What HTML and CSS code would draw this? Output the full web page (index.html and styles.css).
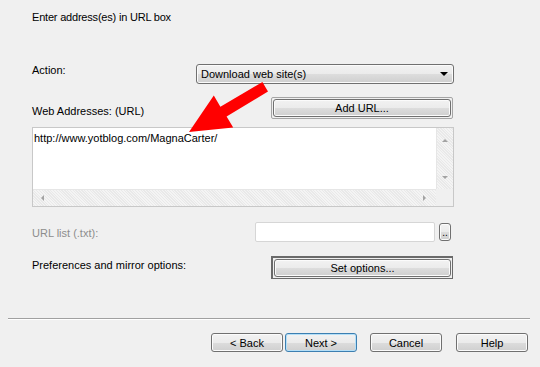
FILE: index.html
```html
<!DOCTYPE html>
<html lang="en">
<head>
  <meta charset="UTF-8">
  <title>Enter address(es) in URL box</title>
  <link rel="stylesheet" href="styles.css">
</head>
<body>
  <div class="wizard">
    <p class="intro">Enter address(es) in URL box</p>

    <div class="form">
      <div class="row row-action">
        <span class="label">Action:</span>
        <div class="select">
          <span>Download web site(s)</span>
          <span class="caret"></span>
        </div>
      </div>

      <div class="row row-urls">
        <span class="label">Web Addresses: (URL)</span>
        <div class="btn-frame">
          <button class="btn">Add URL...</button>
        </div>
      </div>

      <div class="url-box">
        <div class="url-text">http://www.yotblog.com/MagnaCarter/</div>
        <div class="vscroll">
          <span class="arr arr-up"></span>
          <span class="arr arr-down"></span>
        </div>
        <div class="hscroll">
          <span class="arr arr-left"></span>
          <span class="arr arr-right"></span>
        </div>
        <div class="corner"></div>
      </div>

      <div class="row row-list">
        <span class="label disabled">URL list (.txt):</span>
        <div class="list-ctrl">
          <div class="text-input"></div>
          <button class="btn btn-tiny">..</button>
        </div>
      </div>

      <div class="row row-prefs">
        <span class="label">Preferences and mirror options:</span>
        <div class="btn-frame sunken">
          <button class="btn">Set options...</button>
        </div>
      </div>
    </div>

    <div class="sep"></div>

    <div class="actions">
      <button class="btn btn-nav">&lt; Back</button>
      <button class="btn btn-nav default">Next &gt;</button>
      <button class="btn btn-nav cancel">Cancel</button>
      <button class="btn btn-nav help">Help</button>
    </div>

    <svg class="arrow" width="540" height="367" viewBox="0 0 540 367">
      <polygon fill="#ff0000" points="189,132 213.8,95.5 220.4,106.8 262.4,82 268,91.6 226.6,116.4 233.2,127.6"/>
    </svg>
  </div>
</body>
</html>
```

FILE: styles.css
```css
* { margin: 0; padding: 0; box-sizing: border-box; }
body {
  background: #f0f0f0;
  font-family: 'Liberation Sans', Arial, sans-serif;
  font-size: 11px;
  color: #000;
}
.wizard {
  position: relative;
  width: 540px;
  height: 367px;
  overflow: hidden;
}
.intro {
  padding: 11px 0 0 32px;
  line-height: 13px;
  letter-spacing: -0.2px;
}
.form {
  padding: 0 86px 0 32px;
}
.row {
  display: flex;
  justify-content: space-between;
  align-items: flex-start;
  line-height: 13px;
}
.label.disabled { color: #8d8d8d; }

.row-action { margin-top: 40px; height: 20px; }
.row-urls { margin-top: 13px; height: 22px; }
.row-urls .label { margin-top: 8px; }
.row-list { margin-top: 15px; height: 20px; }
.row-list .label { margin-top: 5px; }
.row-prefs { margin-top: 14px; height: 23px; }
.row-prefs .label { margin-top: 3px; }

.btn {
  font: inherit;
  color: #000;
  height: 19px;
  border: 1px solid #707070;
  border-radius: 3px;
  background: linear-gradient(#f2f2f2 0%, #ebebeb 50%, #dddddd 50%, #cfcfcf 100%);
  box-shadow: inset 0 0 0 1px #fbfbfb;
  line-height: 16px;
  text-align: center;
}

.select {
  width: 258px;
  height: 20px;
  display: flex;
  align-items: center;
  justify-content: space-between;
  padding: 0 5px 0 4px;
  border: 1px solid #707070;
  border-radius: 3px;
  background: linear-gradient(#f2f2f2 0%, #ebebeb 50%, #dddddd 50%, #cfcfcf 100%);
  box-shadow: inset 0 0 0 1px #fbfbfb;
}
.caret {
  width: 0;
  height: 0;
  border-left: 4px solid transparent;
  border-right: 4px solid transparent;
  border-top: 4px solid #000;
}

.btn-frame {
  width: 182px;
  height: 22px;
  margin-right: 1px;
  padding: 1px;
  border: 1px solid #a5a5a5;
  border-radius: 2px;
}
.btn-frame .btn { width: 100%; height: 18px; line-height: 15px; }
.btn-frame.sunken {
  height: 23px;
  border: 1px solid #6a6a6a;
  border-top-width: 2px;
  border-left-width: 2px;
  border-radius: 0;
}

.url-box {
  margin-top: 8px;
  height: 80px;
  border: 1px solid #c8c8c8;
  background: #fff;
  display: grid;
  grid-template-columns: 1fr 17px;
  grid-template-rows: 1fr 17px;
}
.url-text {
  padding: 4px 0 0 1px;
  line-height: 13px;
}
.vscroll, .hscroll {
  position: relative;
  background: repeating-linear-gradient(45deg, #f4f4f4 0 1px, #e9e9e9 1px 2px);
}
.vscroll { border-left: 1px solid #e6e6e6; }
.hscroll { border-top: 1px solid #e6e6e6; }
.corner { background: #f0f0f0; }
.arr {
  position: absolute;
  width: 0;
  height: 0;
}
.arr-up {
  left: 5px; top: 11px;
  border-left: 3px solid transparent;
  border-right: 3px solid transparent;
  border-bottom: 3px solid #a3a3a3;
}
.arr-down {
  left: 5px; bottom: 10px;
  border-left: 3px solid transparent;
  border-right: 3px solid transparent;
  border-top: 3px solid #a3a3a3;
}
.arr-left {
  left: 8px; top: 5px;
  border-top: 3px solid transparent;
  border-bottom: 3px solid transparent;
  border-right: 3px solid #a3a3a3;
}
.arr-right {
  right: 10px; top: 5px;
  border-top: 3px solid transparent;
  border-bottom: 3px solid transparent;
  border-left: 3px solid #a3a3a3;
}

.list-ctrl {
  display: flex;
  gap: 4px;
  margin-right: 3px;
}
.text-input {
  width: 180px;
  height: 20px;
  border: 1px solid #d6d6d6;
  border-radius: 2px;
  background: #fff;
}
.btn-tiny {
  width: 12px;
  height: 18px;
  margin-top: 1px;
  line-height: 18px;
  font-size: 10px;
}

.sep {
  margin: 39px 10px 0 8px;
  height: 2px;
  border-top: 1px solid #a0a0a0;
  border-bottom: 1px solid #fff;
}
.actions {
  display: flex;
  justify-content: flex-end;
  padding-right: 12px;
  margin-top: 13px;
}
.btn-nav { width: 72px; }
.btn-nav.default {
  margin-left: 2px;
  border-color: #3c7fb1;
  box-shadow: inset 0 0 0 1px #b5dff7;
}
.btn-nav.cancel { margin-left: 13px; }
.btn-nav.help { margin-left: 14px; }

.arrow {
  position: absolute;
  left: 0;
  top: 0;
  pointer-events: none;
}
```
